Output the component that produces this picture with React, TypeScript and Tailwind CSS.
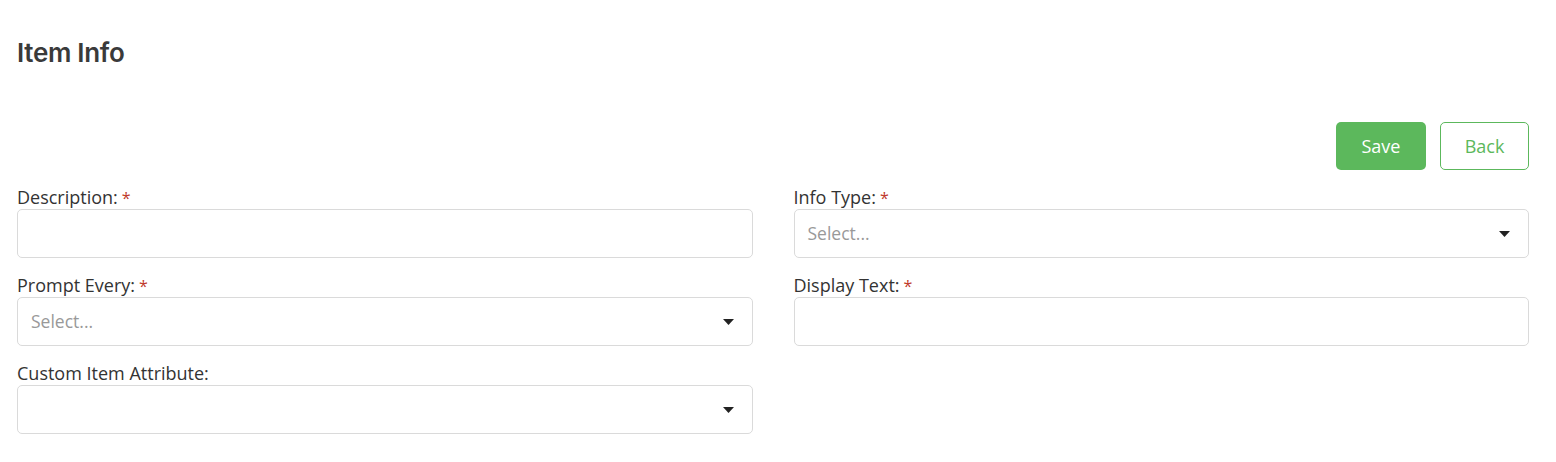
import { ReactNode } from "react";

const Caret = () => (
  <svg width="11" height="6" viewBox="0 0 11 6" className="shrink-0">
    <path d="M0 0 L11 0 L5.5 6 Z" fill="#222" />
  </svg>
);

const Label = ({ text, required }: { text: string; required?: boolean }) => (
  <div className="h-[22px] leading-[22px] text-[18px] text-[#333] mb-px">
    {text}
    {required && <span className="text-[#c0392b] ml-1 text-[16px]">*</span>}
  </div>
);

const Field = ({ children }: { children: ReactNode }) => <div className="mb-[16px]">{children}</div>;

const TextBox = () => (
  <div className="h-[49px] border border-[#dadada] rounded-[5px] bg-white" />
);

const SelectBox = ({ placeholder }: { placeholder?: string }) => (
  <div className="h-[49px] border border-[#dadada] rounded-[5px] bg-white flex items-center justify-between pl-[13px] pr-[18px]">
    <span className="text-[17.5px] text-[#999]">{placeholder}</span>
    <Caret />
  </div>
);

const App = () => {
  return (
    <div
      className="bg-white w-[1556px] h-[462px] pl-[17px] pr-[27px] pt-[37px]"
      style={{ fontFamily: '"Open Sans", "Noto Sans", sans-serif' }}
    >
      <h1
        className="text-[26px] font-semibold text-[#3a3a3a] h-[32px] leading-[32px] tracking-[-0.3px]"
        style={{ fontFamily: 'Inter, "Noto Sans", sans-serif' }}
      >
        Item Info
      </h1>
      <div className="flex justify-end gap-[14px] mt-[53px] mb-[16px]">
        <button className="w-[90px] h-[48px] rounded-[5px] bg-[#5cb85c] text-white text-[18px]">Save</button>
        <button className="w-[89px] h-[48px] rounded-[5px] border border-[#5cb85c] text-[#5cb85c] text-[18px] bg-white">Back</button>
      </div>
      <div className="grid grid-cols-2 gap-x-[41px]">
        <div>
          <Field>
            <Label text="Description:" required />
            <TextBox />
          </Field>
          <Field>
            <Label text="Prompt Every:" required />
            <SelectBox placeholder="Select..." />
          </Field>
          <Field>
            <Label text="Custom Item Attribute:" />
            <SelectBox />
          </Field>
        </div>
        <div>
          <Field>
            <Label text="Info Type:" required />
            <SelectBox placeholder="Select..." />
          </Field>
          <Field>
            <Label text="Display Text:" required />
            <TextBox />
          </Field>
        </div>
      </div>
    </div>
  );
};

export default App;
